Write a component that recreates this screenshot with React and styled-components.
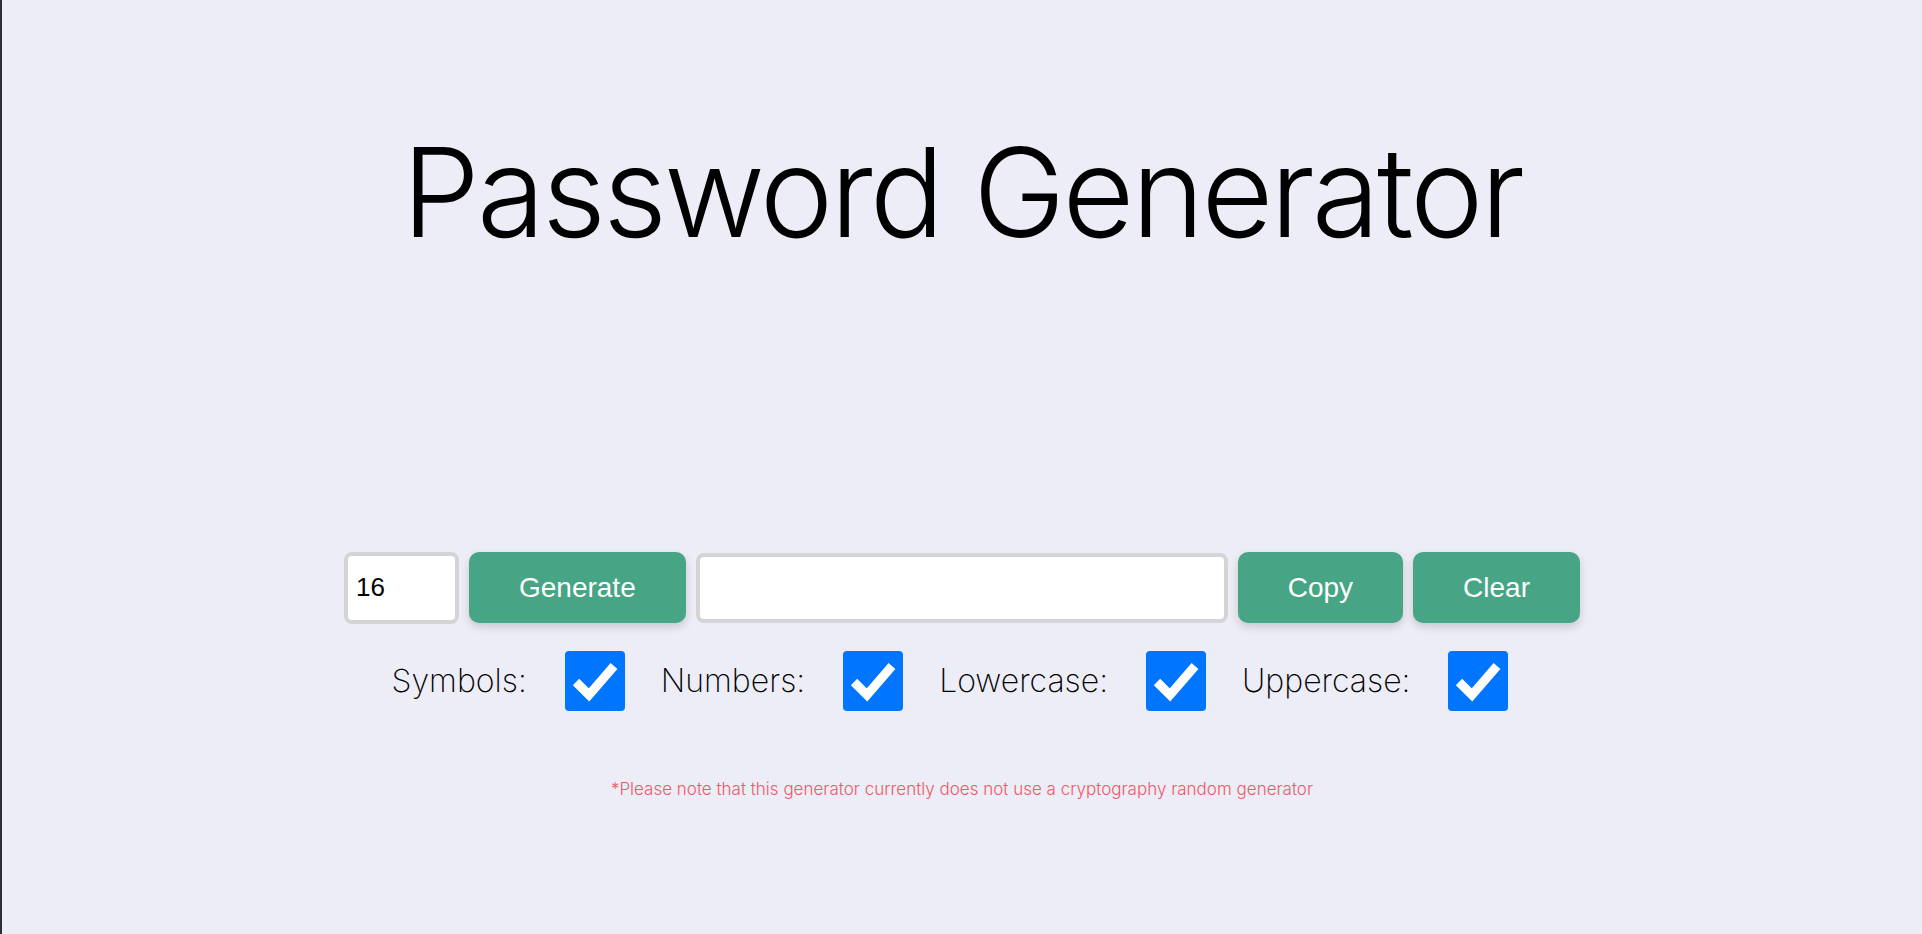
import React, { useState } from "react";
import styled, { createGlobalStyle } from "styled-components";

const GlobalStyle = createGlobalStyle`
  body {
    margin: 0;
    background: #ecedf6;
  }
`;

const Page = styled.div`
  min-height: 100vh;
  box-sizing: border-box;
  border-left: 2px solid #2e2e34;
  background: #ecedf6;
  display: flex;
  flex-direction: column;
  align-items: center;
  font-family: Inter, "Noto Sans", sans-serif;
`;

const Title = styled.h1`
  margin: 118px 0 0;
  font-family: Inter, "Noto Sans", sans-serif;
  font-weight: 300;
  font-size: 124px;
  line-height: 1.2;
  letter-spacing: -3px;
  color: #000000;
`;

const Controls = styled.div`
  display: flex;
  align-items: center;
  gap: 10px;
  margin-top: 285px;
`;

const Field = styled.input`
  box-sizing: border-box;
  width: ${(props) => props.$width}px;
  height: ${(props) => props.$height}px;
  border: 4px solid #d4d4d6;
  border-radius: 8px;
  background: #ffffff;
  padding: 0 8px;
  font-family: "Liberation Sans", Arial, sans-serif;
  font-size: 26px;
  color: #000000;
  outline: none;
`;

const Button = styled.button`
  height: 71px;
  padding: 0 50px;
  border: none;
  border-radius: 10px;
  background: #47a586;
  color: #ffffff;
  font-family: "Liberation Sans", Arial, sans-serif;
  font-size: 28px;
  box-shadow: 0 4px 8px rgba(0, 0, 0, 0.16);
  cursor: pointer;
`;

const Options = styled.div`
  display: flex;
  align-items: center;
  gap: 36px;
  margin-top: 27px;
  padding-right: 24px;
`;

const Option = styled.label`
  display: flex;
  align-items: center;
  gap: 38px;
  font-family: Inter, "Noto Sans", sans-serif;
  font-weight: 200;
  font-size: 32px;
  color: #000000;
  cursor: pointer;
`;

const Box = styled.span`
  display: block;
  width: 60px;
  height: 60px;
`;

const Note = styled.p`
  margin: 66px 0 0;
  font-family: Inter, "Noto Sans", sans-serif;
  font-weight: 300;
  font-size: 17px;
  line-height: 24px;
  color: #f2576a;
`;

const CheckBox = ({ checked }) => (
  <Box>
    <svg width="60" height="60" viewBox="0 0 60 60">
      <rect width="60" height="60" rx="4" fill={checked ? "#0075ff" : "#ffffff"} />
      {checked ? (
        <polyline
          points="11,31 24,44 49,15"
          fill="none"
          stroke="#ffffff"
          strokeWidth="9"
        />
      ) : null}
    </svg>
  </Box>
);

const options = ["Symbols", "Numbers", "Lowercase", "Uppercase"];

export default function App() {
  const [length, setLength] = useState("16");
  const [checks, setChecks] = useState({
    Symbols: true,
    Numbers: true,
    Lowercase: true,
    Uppercase: true,
  });

  const toggle = (name) => {
    setChecks((prev) => ({ ...prev, [name]: !prev[name] }));
  };

  return (
    <Page>
      <GlobalStyle />
      <Title>Password Generator</Title>
      <Controls>
        <Field
          $width={115}
          $height={72}
          value={length}
          onChange={(e) => setLength(e.target.value)}
        />
        <Button>Generate</Button>
        <Field $width={532} $height={70} readOnly value="" />
        <Button>Copy</Button>
        <Button>Clear</Button>
      </Controls>
      <Options>
        {options.map((name) => (
          <Option key={name} onClick={() => toggle(name)}>
            {name}:
            <CheckBox checked={checks[name]} />
          </Option>
        ))}
      </Options>
      <Note>
        *Please note that this generator currently does not use a cryptography
        random generator
      </Note>
    </Page>
  );
}
